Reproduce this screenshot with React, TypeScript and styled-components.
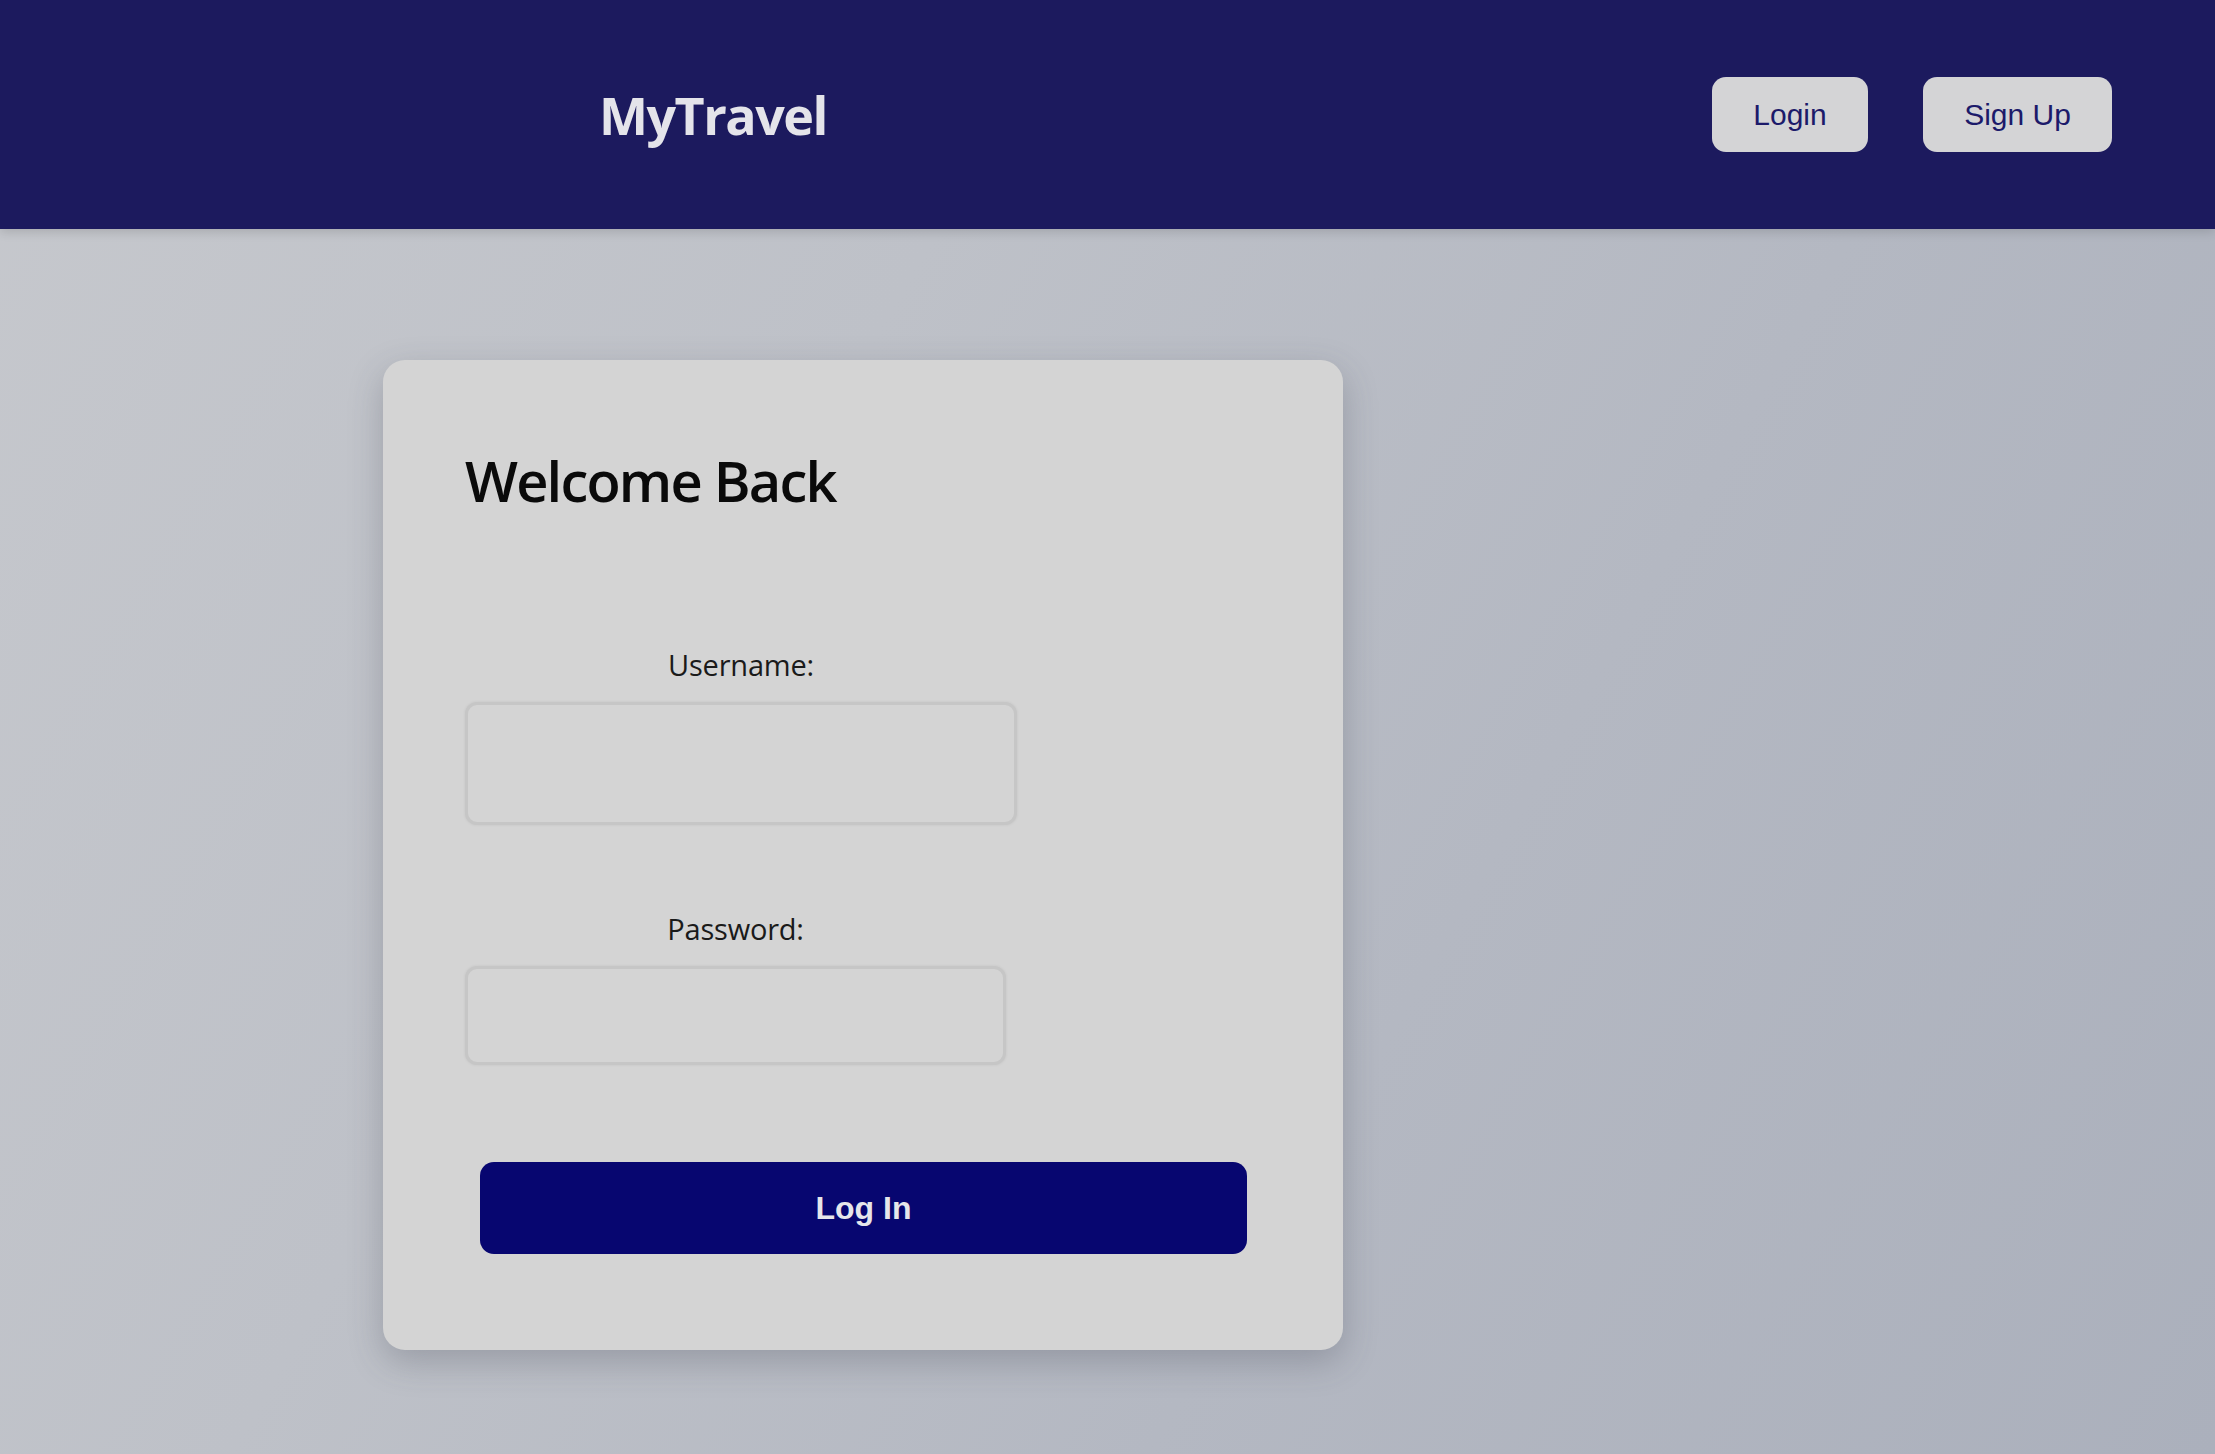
import React from "react";
import styled, { createGlobalStyle } from "styled-components";

const GlobalStyle = createGlobalStyle`
  html, body { margin: 0; padding: 0; }
  body {
    font-family: "Open Sans", "Noto Sans", sans-serif;
    background: #bfc2c9;
  }
  * { box-sizing: border-box; }
`;

const Page = styled.div`
  min-height: 100vh;
  display: flex;
  flex-direction: column;
  background: linear-gradient(120deg, #c6c8cd 0%, #bec1c8 35%, #b4b8c2 65%, #abb0bc 100%);
`;

const Header = styled.header`
  height: 229px;
  flex-shrink: 0;
  background: #1c1a5e;
  display: flex;
  align-items: center;
  justify-content: space-between;
  padding: 0 103px 0 599px;
  box-shadow: 0 3px 10px rgba(0, 0, 0, 0.14);
`;

const Logo = styled.h1`
  margin: 0;
  font-family: "Open Sans", sans-serif;
  font-weight: 700;
  font-size: 52px;
  letter-spacing: -1.5px;
  color: #e4e4ea;
`;

const Nav = styled.nav`
  display: flex;
  align-items: center;
  gap: 55px;
`;

const NavButton = styled.button<{ $w: number }>`
  width: ${(p) => p.$w}px;
  height: 75px;
  border: none;
  border-radius: 14px;
  background: #d4d4d6;
  color: #1c1a6a;
  font-family: "Liberation Sans", Arial, sans-serif;
  font-size: 30px;
  cursor: pointer;
`;

const Main = styled.main`
  flex: 1;
  padding: 131px 0 80px 383px;
`;

const Card = styled.section`
  width: 960px;
  background: #d4d4d4;
  border-radius: 22px;
  padding: 85px 96px 96px 82px;
  box-shadow: 0 12px 34px rgba(60, 64, 80, 0.28);
  display: flex;
  flex-direction: column;
  align-items: flex-start;
`;

const Title = styled.h2`
  margin: 0;
  font-family: "Open Sans", sans-serif;
  font-weight: 600;
  font-size: 56px;
  line-height: 70px;
  letter-spacing: -1.8px;
  color: #0a0a0a;
`;

const Field = styled.div<{ $top: number }>`
  display: flex;
  flex-direction: column;
  align-items: center;
  gap: 17px;
  margin-top: ${(p) => p.$top}px;
`;

const Label = styled.label`
  font-family: "Open Sans", sans-serif;
  font-size: 29px;
  line-height: 40px;
  letter-spacing: -0.2px;
  color: #1a1a1a;
`;

const Input = styled.input<{ $w: number; $h: number }>`
  width: ${(p) => p.$w}px;
  height: ${(p) => p.$h}px;
  background: #d4d4d4;
  border: 3px solid #c6c6c6;
  border-radius: 12px;
  box-shadow: 0 0 3px rgba(0, 0, 0, 0.08);
  outline: none;
`;

const Submit = styled.button`
  align-self: stretch;
  margin: 97px 0 0 15px;
  height: 92px;
  border: none;
  border-radius: 14px;
  background: #070670;
  color: #e6e6ea;
  font-family: "Liberation Sans", Arial, sans-serif;
  font-weight: 700;
  font-size: 32px;
  cursor: pointer;
`;

export default function App() {
  return (
    <>
      <GlobalStyle />
      <Page>
        <Header>
          <Logo>MyTravel</Logo>
          <Nav>
            <NavButton $w={156}>Login</NavButton>
            <NavButton $w={189}>Sign Up</NavButton>
          </Nav>
        </Header>
        <Main>
          <Card>
            <Title>Welcome Back</Title>
            <Field $top={130}>
              <Label htmlFor="username">Username:</Label>
              <Input id="username" type="text" $w={552} $h={123} />
            </Field>
            <Field $top={84}>
              <Label htmlFor="password">Password:</Label>
              <Input id="password" type="password" $w={541} $h={99} />
            </Field>
            <Submit>Log In</Submit>
          </Card>
        </Main>
      </Page>
    </>
  );
}
